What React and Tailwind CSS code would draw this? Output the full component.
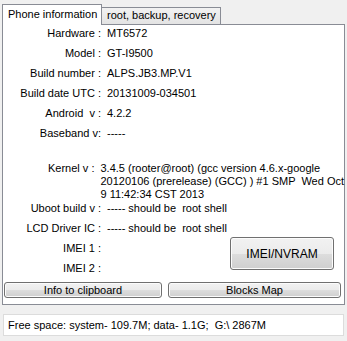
import React from "react";

const rowLabel = "w-[98px] text-right whitespace-pre";

function Row({ label, value, className = "" }) {
  return (
    <div className={`flex leading-[13px] ${className}`}>
      <div className={rowLabel}>{label}</div>
      <div className="ml-[6px] whitespace-pre">{value}</div>
    </div>
  );
}

function WinButton({ children, className = "" }) {
  return (
    <button
      className={`rounded-[3px] border border-[#707070] bg-[linear-gradient(#f2f2f2_0%,#ebebeb_50%,#dddddd_51%,#cfcfcf_100%)] shadow-[inset_0_0_0_1px_#fcfcfc] text-black ${className}`}
    >
      {children}
    </button>
  );
}

export default function App() {
  return (
    <div
      className="w-[347px] h-[341px] bg-[#f0f0f0] text-[11px] text-black overflow-hidden"
      style={{ fontFamily: '"Liberation Sans", Arial, sans-serif' }}
    >
      <div className="flex items-end h-[24px] pl-[2px]">
        <div className="relative z-10 h-[21px] mb-[-1px] w-[100px] border border-b-0 border-[#898c95] bg-white pl-[5px] pt-[3px] leading-[13px]">
          Phone information
        </div>
        <div className="h-[17px] w-[119px] border border-b-0 border-l-0 border-[#898c95] bg-[linear-gradient(#f2f2f2,#e3e3e3)] pl-[5px] pt-[1px] leading-[13px]">
          root, backup, recovery
        </div>
      </div>

      <div className="ml-[2px] w-[343px] h-[281px] border border-[#898c95] bg-white flex flex-col">
        <Row label="Hardware :" value="MT6572" className="mt-[2px]" />
        <Row label="Model :" value="GT-I9500" className="mt-[7px]" />
        <Row label="Build number :" value="ALPS.JB3.MP.V1" className="mt-[7px]" />
        <Row label="Build date UTC :" value="20131009-034501" className="mt-[7px]" />
        <Row label="Android  v :" value="4.2.2" className="mt-[7px]" />
        <Row label="Baseband v:" value="-----" className="mt-[7px]" />
        <Row
          label="Kernel v :"
          className="mt-[22px]"
          value={
            <>
              3.4.5 (rooter@root) (gcc version 4.6.x-google
              <br />
              20120106 (prerelease) (GCC) ) #1 SMP  Wed Oct
              <br />9 11:42:34 CST 2013
            </>
          }
        />
        <Row label="Uboot build v :" value="----- should be  root shell" className="mt-[1px]" />
        <Row label="LCD Driver IC :" value="----- should be  root shell" className="mt-[7px]" />
        <div className="flex mt-[1px]">
          <div className="flex flex-col">
            <Row label="IMEI 1 :" value="" className="mt-[6px]" />
            <Row label="IMEI 2 :" value="" className="mt-[7px]" />
          </div>
          <WinButton className="ml-auto mr-[10px] mt-[1px] w-[104px] h-[33px] text-[12px]">
            IMEI/NVRAM
          </WinButton>
        </div>
        <div className="flex mt-[7px] pl-[1px] pr-[2px] gap-[6px]">
          <WinButton className="w-[158px] h-[16px] leading-[13px]">Info to clipboard</WinButton>
          <WinButton className="w-[173px] h-[16px] leading-[13px]">Blocks Map</WinButton>
        </div>
      </div>

      <div className="ml-[3px] mt-[9px] w-[341px] h-[22px] border border-[#dcdcdc] bg-white pl-[4px] leading-[20px] whitespace-pre">
        Free space: system- 109.7M; data- 1.1G;  G:\ 2867M
      </div>
    </div>
  );
}
